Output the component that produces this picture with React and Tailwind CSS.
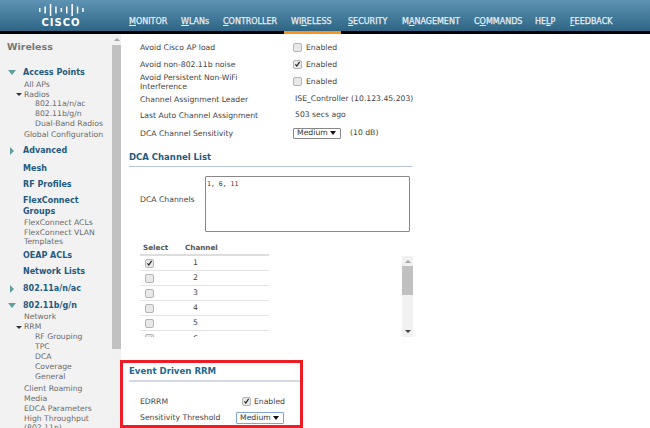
import React from 'react';

const navItems = [
  { label: 'MONITOR', key: 0, width: 'w-[52px]' },
  { label: 'WLANs', key: 0, width: 'w-[42px]' },
  { label: 'CONTROLLER', key: 0, width: 'w-[68px]' },
  { label: 'WIRELESS', key: 2, width: 'w-[57px]' },
  { label: 'SECURITY', key: 0, width: 'w-[54px]' },
  { label: 'MANAGEMENT', key: 1, width: 'w-[72px]' },
  { label: 'COMMANDS', key: 1, width: 'w-[61px]' },
  { label: 'HELP', key: 2, width: 'w-[35px]' },
  { label: 'FEEDBACK', key: 0, width: 'w-[50px]' },
];

const Triangle = ({ open, small }) => {
  if (small) {
    return <span className="w-0 h-0 border-x-[3px] border-x-transparent border-t-[3px] border-t-[#333]" />;
  }
  if (open) {
    return <span className="w-0 h-0 border-x-[4px] border-x-transparent border-t-[5px] border-t-[#5f9ea0]" />;
  }
  return <span className="w-0 h-0 ml-[1px] border-y-[4px] border-y-transparent border-l-[4px] border-l-[#5f9ea0]" />;
};

const logoBars = [4, 7, 12, 7, 4, 7, 12, 7, 4];

const Logo = () => (
  <svg width="46" height="14" viewBox="0 0 46 14" className="block">
    {logoBars.map((h, i) => (
      <rect key={i} x={1 + i * 5.4} y={7 - h / 2} width="1.5" height={h} fill="#fff" />
    ))}
  </svg>
);

const SideHead = ({ children, arrow, className = '' }) => (
  <div className={`flex font-bold text-[8px] leading-[11px] text-[#1f5a80] ${className}`}>
    <span className="w-[23px] h-[11px] flex items-center justify-center shrink-0">
      {arrow === 'open' && <Triangle open />}
      {arrow === 'closed' && <Triangle />}
    </span>
    <span>{children}</span>
  </div>
);

const SideItem = ({ children, indent = 'pl-[24px]', className = '' }) => (
  <div className={`text-[7.7px] text-[#6b6b6b] ${indent} ${className}`}>{children}</div>
);

const Sub = ({ children }) => <SideItem indent="pl-[35px]" className="leading-[10px]">{children}</SideItem>;

const Sidebar = () => (
  <aside className="w-[112px] shrink-0 bg-[#f2f2f2] overflow-hidden pt-[6px] h-full">
    <div className="pl-[7px] font-bold text-[9.5px] leading-[14px] text-[#777]">Wireless</div>
    <SideHead arrow="open" className="mt-[13px]">Access Points</SideHead>
    <SideItem className="mt-[2px] leading-[10px]">All APs</SideItem>
    <div className="flex items-center h-[9px] pl-[16px] gap-[2px] text-[7.7px] text-[#6b6b6b]">
      <Triangle small /> <span>Radios</span>
    </div>
    <Sub>802.11a/n/ac</Sub>
    <Sub>802.11b/g/n</Sub>
    <Sub>Dual-Band Radios</Sub>
    <SideItem className="mt-[1px] leading-[10px]">Global Configuration</SideItem>
    <SideHead arrow="closed" className="mt-[5px]">Advanced</SideHead>
    <SideHead className="mt-[7px]">Mesh</SideHead>
    <SideHead className="mt-[5px]">RF Profiles</SideHead>
    <SideHead className="mt-[5px]">FlexConnect<br />Groups</SideHead>
    <SideItem className="mt-[1px] leading-[9px]">FlexConnect ACLs</SideItem>
    <SideItem className="mt-[1px] leading-[9px]">FlexConnect VLAN<br />Templates</SideItem>
    <SideHead className="mt-[4px]">OEAP ACLs</SideHead>
    <SideHead className="mt-[5px]">Network Lists</SideHead>
    <SideHead arrow="closed" className="mt-[6px]">802.11a/n/ac</SideHead>
    <SideHead arrow="open" className="mt-[6px]">802.11b/g/n</SideHead>
    <SideItem className="mt-[1px] leading-[10px]">Network</SideItem>
    <div className="flex items-center h-[10px] pl-[16px] gap-[2px] text-[7.7px] text-[#6b6b6b]">
      <Triangle small /> <span>RRM</span>
    </div>
    <Sub>RF Grouping</Sub>
    <Sub>TPC</Sub>
    <Sub>DCA</Sub>
    <Sub>Coverage</Sub>
    <Sub>General</Sub>
    <SideItem className="mt-[2px] leading-[10px]">Client Roaming</SideItem>
    <SideItem className="leading-[10px]">Media</SideItem>
    <SideItem className="leading-[10px]">EDCA Parameters</SideItem>
    <SideItem className="leading-[9px]">High Throughput<br />(802.11n)</SideItem>
  </aside>
);

const Check = ({ checked }) => (
  <span className="w-[9px] h-[9px] rounded-[2px] border border-[#b5b5b5] bg-[#e8e8e8] shrink-0 flex items-center justify-center">
    {checked && (
      <svg viewBox="0 0 10 10" className="w-[8px] h-[8px]">
        <path d="M2 5.5 L4 8 L8 2" fill="none" stroke="#222" strokeWidth="1.7" />
      </svg>
    )}
  </span>
);

const Row = ({ label, h, children }) => (
  <div className={`flex items-center ${h}`}>
    <div className="w-[164px] pl-[11px] leading-[9px] shrink-0">{label}</div>
    {children}
  </div>
);

const Enabled = ({ checked, className = 'gap-[4px]' }) => (
  <div className={`flex items-center ${className}`}>
    <Check checked={checked} />
    <span>Enabled</span>
  </div>
);

const Select = ({ className = '' }) => (
  <div className={`w-[48px] flex items-center justify-between pl-[3px] pr-[4px] border rounded-[1px] bg-white text-[#333] ${className}`}>
    <span>Medium</span>
    <span className="w-0 h-0 border-x-[3px] border-x-transparent border-t-[4px] border-t-[#111]" />
  </div>
);

const channels = [1, 2, 3, 4, 5];

export default function App() {
  return (
    <div className="w-[650px] h-[428px] overflow-hidden bg-white text-[7.7px] text-[#444] font-['DejaVu_Sans',sans-serif]">
      <header className="h-[31px] bg-gradient-to-b from-[#5e93b3] to-[#2e6585] flex">
        <div className="w-[129px] shrink-0 pl-[38px] pt-[3px]">
          <Logo />
          <div className="w-[46px] text-center font-bold text-[10px] leading-[10px] tracking-[1px] text-white mt-[1px]">CISCO</div>
        </div>
        <nav className="flex items-end pb-[3px] text-[8px] leading-[12px] text-[#e6eef3] [-webkit-text-stroke:0.25px_#e6eef3]">
          {navItems.map((item) => (
            <span key={item.label} className={`${item.width} whitespace-nowrap`}>
              {item.label.slice(0, item.key)}
              <span className="underline">{item.label[item.key]}</span>
              {item.label.slice(item.key + 1)}
            </span>
          ))}
        </nav>
      </header>
      <div className="h-[3px] bg-black pl-[284px]">
        <div className="w-[57px] h-full bg-[#f7941d]" />
      </div>

      <div className="flex h-[394px]">
        <Sidebar />
        {/* sidebar scrollbar */}
        <div className="w-[9px] h-full bg-[#f1f1f1] flex flex-col items-center shrink-0">
          <span className="mt-[4px] w-0 h-0 border-x-[3px] border-x-transparent border-b-[3px] border-b-[#a3a3a3]" />
          <div className="w-full mt-[4px] h-[304px] bg-[#c1c1c1]" />
        </div>
        <main className="flex-1 pl-[8px]">
          <Row label="Avoid Cisco AP load" h="h-[17px] mt-[5px]"><Enabled /></Row>
          <Row label="Avoid non-802.11b noise" h="h-[17px]"><Enabled checked /></Row>
          <Row label={<>Avoid Persistent Non-WiFi<br />Interference</>} h="h-[17px]"><Enabled /></Row>
          <Row label="Channel Assignment Leader" h="h-[18px]"><span className="ml-[2px]">ISE_Controller (10.123.45.203)</span></Row>
          <Row label="Last Auto Channel Assignment" h="h-[14px]"><span className="ml-[2px]">503 secs ago</span></Row>
          <Row label="DCA Channel Sensitivity" h="h-[14px] mt-[4px]">
            <Select className="h-[11px] border-[#888]" />
            <span className="ml-[9px]">(10 dB)</span>
          </Row>

          <h2 className="mt-[12px] w-[283px] h-[15px] font-bold text-[8.5px] leading-[10px] text-[#1f5a80] border-b border-[#b8c4dc]">DCA Channel List</h2>
          <div className="flex mt-[9px] h-[56px]">
            <div className="w-[76px] pl-[11px] pt-[19px] leading-[10px] shrink-0">DCA Channels</div>
            <div className="w-[205px] h-[56px] border border-[#888] rounded-[1px] px-[1px] py-[2px] text-[6.5px] leading-[10px] font-['DejaVu_Sans_Mono',monospace] text-[#333]">1, 6, 11</div>
          </div>

          <div className="flex mt-[10px] h-[95px] w-[284px]">
            <div className="ml-[11px] w-[129px] overflow-hidden">
              <div className="flex h-[14px] leading-[12px] font-bold text-[7.2px] text-[#555] border-b-2 border-[#ddd] pl-[3px]">
                <span className="w-[42px]">Select</span>
                <span>Channel</span>
              </div>
              {channels.map((ch, i) => (
                <div key={ch} className="flex items-center h-[15px] border-b border-[#e5e5e5]">
                  <span className="w-[53px] pl-[5px]"><Check checked={i === 0} /></span>
                  <span>{ch}</span>
                </div>
              ))}
              <div className="h-[6px] overflow-hidden">
                <div className="flex items-center h-[15px]">
                  <span className="w-[53px] pl-[5px]"><Check checked /></span>
                  <span>6</span>
                </div>
              </div>
            </div>
            <div className="flex-1" />
            {/* channel list scrollbar */}
            <div className="w-[11px] h-[81px] mt-[14px] bg-[#f1f1f1] flex flex-col items-center shrink-0">
              <span className="mt-[4px] w-0 h-0 border-x-[3px] border-x-transparent border-b-[3px] border-b-[#a3a3a3]" />
              <div className="w-full mt-[3px] h-[29px] bg-[#c1c1c1]" />
              <span className="mt-auto mb-[4px] w-0 h-0 border-x-[3px] border-x-transparent border-t-[3px] border-t-[#444]" />
            </div>
          </div>

          <section className="mt-[23px] -ml-[9px] w-[183px] h-[68px] border-[3px] border-[#ee1c25] pl-[6px]">
            <h2 className="h-[19px] pt-[3px] font-bold text-[8.6px] leading-[11px] text-[#1f6a90] border-b-2 border-[#d5d9e6]">Event Driven RRM</h2>
            <div className="flex items-center justify-between h-[13px] mt-[13px] pl-[11px] pr-[15px]">
              <span>EDRRM</span>
              <Enabled checked className="gap-[3px]" />
            </div>
            <div className="flex items-center justify-between h-[13px] mt-[3px] pl-[11px] pr-[16px]">
              <span>Sensitivity Threshold</span>
              <Select className="h-[12px] border-[#7ea6d8]" />
            </div>
          </section>
        </main>
      </div>
    </div>
  );
}
